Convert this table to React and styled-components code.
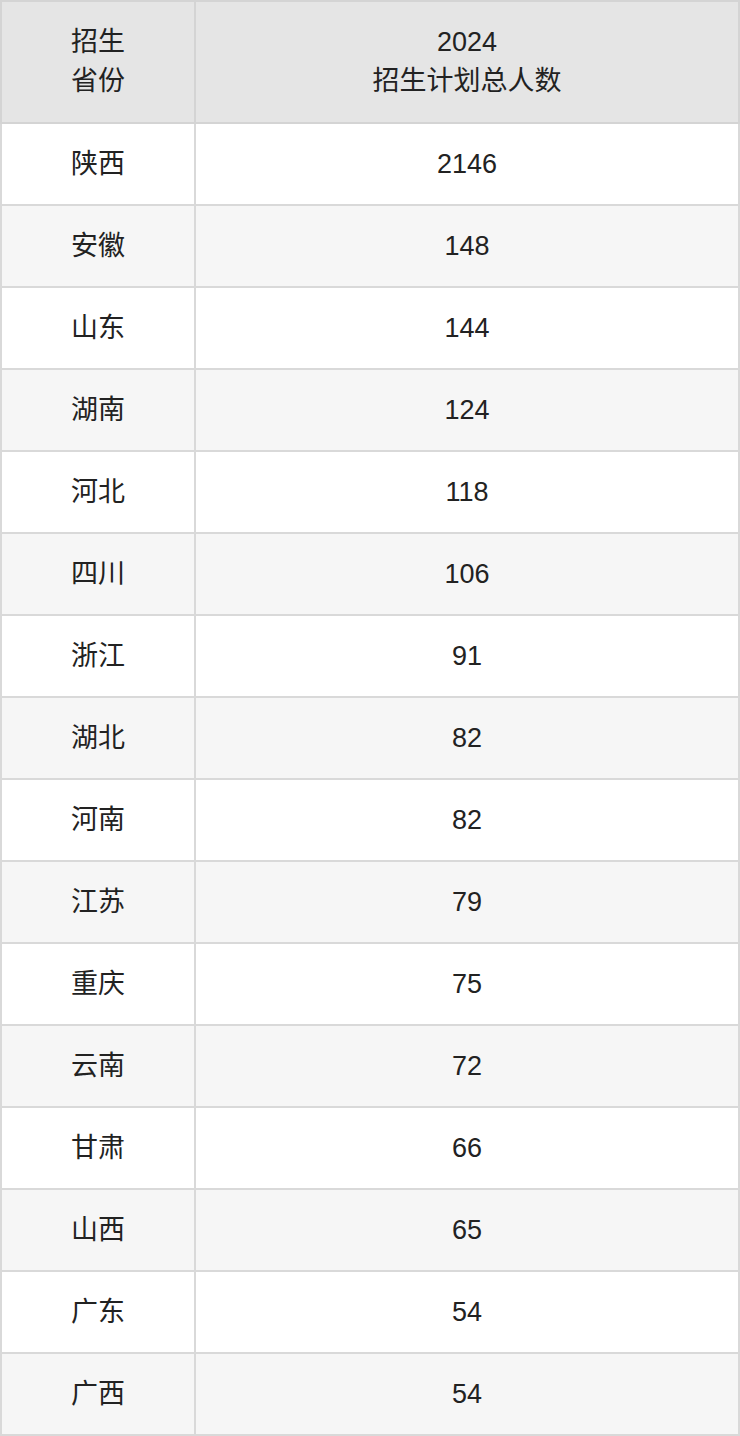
import React from "react";
import styled, { createGlobalStyle } from "styled-components";

const Global = createGlobalStyle`
  html, body { margin: 0; padding: 0; background: #fff; }
  body { font-family: "Liberation Sans", Arial, "Noto Sans CJK SC", sans-serif; }
`;

const Table = styled.table`
  width: 740px;
  border-collapse: collapse;
  table-layout: fixed;
  font-size: 27px;
  line-height: 38px;
  color: #222;
`;

const HeadCell = styled.th`
  background: #e5e5e5;
  border: 2px solid #d4d4d4;
  height: 120px;
  padding: 0;
  font-weight: 400;
  line-height: 39px;
  text-align: center;
  vertical-align: middle;
  width: ${(p) => (p.$narrow ? "192px" : "auto")};
`;

const Row = styled.tr`
  background: ${(p) => (p.$striped ? "#f6f6f6" : "#ffffff")};
`;

const Cell = styled.td`
  border: 2px solid #d9d9d9;
  height: 80px;
  padding: 0;
  text-align: center;
  vertical-align: middle;
`;

const data = [
  ["陕西", 2146],
  ["安徽", 148],
  ["山东", 144],
  ["湖南", 124],
  ["河北", 118],
  ["四川", 106],
  ["浙江", 91],
  ["湖北", 82],
  ["河南", 82],
  ["江苏", 79],
  ["重庆", 75],
  ["云南", 72],
  ["甘肃", 66],
  ["山西", 65],
  ["广东", 54],
  ["广西", 54],
];

export default function App() {
  return (
    <>
      <Global />
      <Table>
        <thead>
          <tr>
            <HeadCell $narrow>
              招生
              <br />
              省份
            </HeadCell>
            <HeadCell>
              2024
              <br />
              招生计划总人数
            </HeadCell>
          </tr>
        </thead>
        <tbody>
          {data.map(([p, n], i) => (
            <Row key={p + i} $striped={i % 2 === 1}>
              <Cell>{p}</Cell>
              <Cell>{n}</Cell>
            </Row>
          ))}
        </tbody>
      </Table>
    </>
  );
}
